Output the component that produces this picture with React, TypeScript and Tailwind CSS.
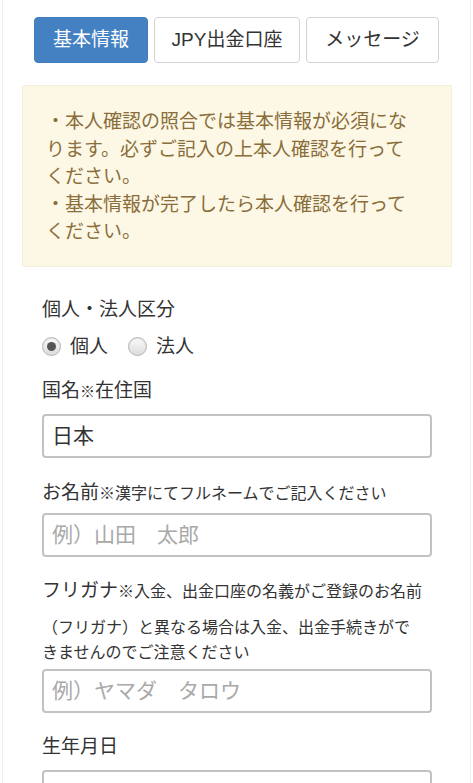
const font = {
  fontFamily: '"Liberation Sans", "Noto Sans CJK JP", sans-serif',
};

const tabs = [
  { label: "基本情報", active: true, width: "w-[114px]" },
  { label: "JPY出金口座", active: false, width: "w-[146px]" },
  { label: "メッセージ", active: false, width: "w-[133px]" },
];

function Radio({ checked, label }: { checked: boolean; label: string }) {
  return (
    <label className="flex items-center gap-[9px]">
      <span className="flex h-[19px] w-[19px] items-center justify-center rounded-full border border-[#b5b5b5] bg-gradient-to-b from-[#fafafa] to-[#dcdcdc] shadow-[inset_0_1px_1px_rgba(0,0,0,0.1)]">
        {checked && <span className="h-[9px] w-[9px] rounded-full bg-[#555]" />}
      </span>
      <span>{label}</span>
    </label>
  );
}

function TextInput({ value, placeholder }: { value?: string; placeholder?: string }) {
  return (
    <div className="flex h-[44px] w-[390px] items-center rounded-[4px] border-2 border-[#c2c2c2] px-[8px] text-[21px]">
      {value ? (
        <span className="text-[#333]">{value}</span>
      ) : (
        <span className="text-[#a9a9a9]">{placeholder}</span>
      )}
    </div>
  );
}

export default function App() {
  return (
    <div style={font} className="min-h-screen w-[473px] bg-white text-[#333]">
      <div className="ml-[2px] min-h-screen w-[469px] border-x border-[#efefef] pb-[40px]">
        {/* tabs */}
        <div className="flex gap-[6px] pt-[17px] pl-[31px]">
          {tabs.map((tab) => (
            <div
              key={tab.label}
              className={
                tab.active
                  ? `${tab.width} flex h-[46px] items-center justify-center rounded-[4px] border border-[#3f7fbf] bg-[#4481c3] text-[19px] text-white`
                  : `${tab.width} flex h-[46px] items-center justify-center rounded-[4px] border border-[#d4d4d4] bg-white text-[19px] text-[#333]`
              }
            >
              {tab.label}
            </div>
          ))}
        </div>

        {/* notice */}
        <div className="mt-[22px] ml-[19px] w-[430px] rounded-[2px] border border-[#f6efd9] bg-[#fcf8e5] pt-[22px] pr-[38px] pb-[20px] pl-[23px] text-[19px] leading-[27.5px] text-[#8a6d3b]">
          <p>・本人確認の照合では基本情報が必須になります。必ずご記入の上本人確認を行ってください。</p>
          <p>・基本情報が完了したら本人確認を行ってください。</p>
        </div>

        {/* form */}
        <div className="pl-[39px] text-[19px] leading-[27px]">
          <div className="mt-[29px]">個人・法人区分</div>
          <div className="mt-[10px] flex gap-[20px]">
            <Radio checked label="個人" />
            <Radio checked={false} label="法人" />
          </div>

          <div className="mt-[17px]">
            国名<span className="text-[15px]">※</span>在住国
          </div>
          <div className="mt-[9px]">
            <TextInput value="日本" />
          </div>

          <div className="mt-[21px]">
            お名前<span className="text-[16px]">※漢字にてフルネームでご記入ください</span>
          </div>
          <div className="mt-[6px]">
            <TextInput placeholder="例）山田　太郎" />
          </div>

          <div className="mt-[20px]">
            フリガナ<span className="text-[16px]">※入金、出金口座の名義がご登録のお名前</span>
          </div>
          <div className="mt-[10px] text-[16px] leading-[25px]">
            （フリガナ）と異なる場合は入金、出金手続きがで
            <br />
            きませんのでご注意ください
          </div>
          <div className="mt-[4px]">
            <TextInput placeholder="例）ヤマダ　タロウ" />
          </div>

          <div className="mt-[20px]">生年月日</div>
          <div className="mt-[10px]">
            <TextInput />
          </div>
        </div>
      </div>
    </div>
  );
}
